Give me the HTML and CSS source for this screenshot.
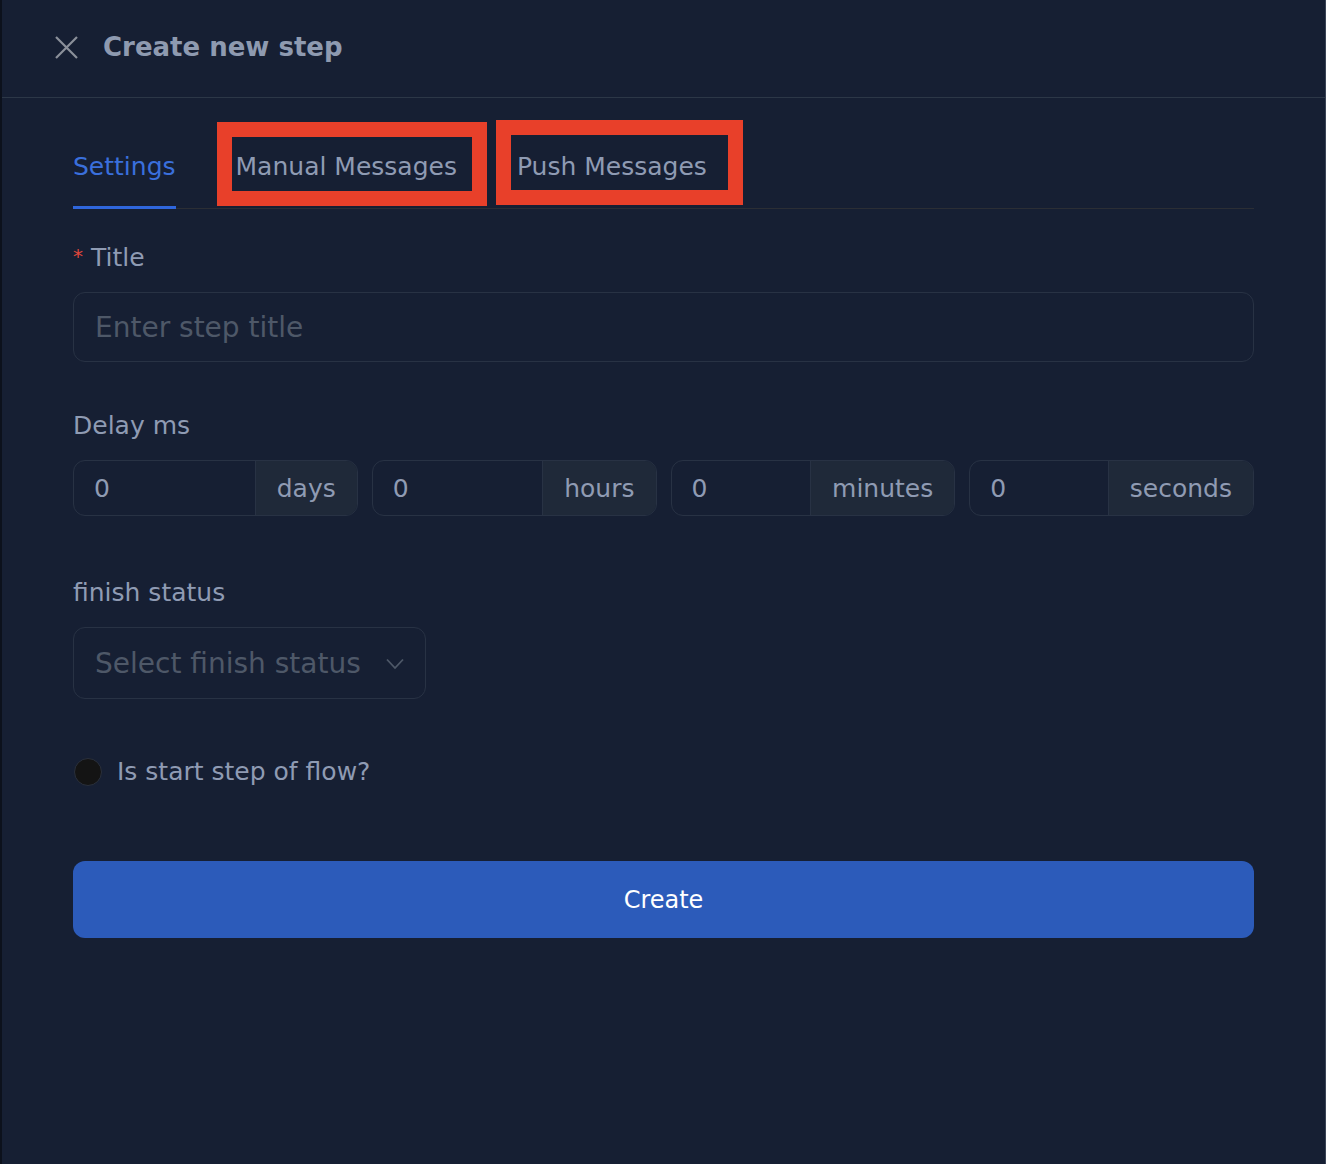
FILE: index.html
```html
<!DOCTYPE html>
<html lang="en">
<head>
<meta charset="utf-8">
<title>Create new step</title>
<link rel="stylesheet" href="styles.css">
</head>
<body>
<div class="drawer">
  <header class="drawer-header">
    <svg class="close-icon" width="23" height="23" viewBox="0 0 23 23" aria-hidden="true">
      <path d="M1 1 L22 22 M22 1 L1 22" stroke="#8b909a" stroke-width="2.2" fill="none"/>
    </svg>
    <h1 class="drawer-title">Create new step</h1>
  </header>
  <main class="drawer-body">
    <nav class="tabs">
      <div class="tab tab-active">Settings</div>
      <div class="tab">Manual Messages</div>
      <div class="tab">Push Messages</div>
      <span class="mark mark-1"></span>
      <span class="mark mark-2"></span>
    </nav>

    <div class="form-item form-first">
      <label class="label"><span class="req">*</span>Title</label>
      <div class="input input-lg"><span class="placeholder">Enter step title</span></div>
    </div>

    <div class="form-item form-delay">
      <label class="label">Delay ms</label>
      <div class="delay-row">
        <div class="group"><span class="g-input">0</span><span class="addon">days</span></div>
        <div class="group"><span class="g-input">0</span><span class="addon">hours</span></div>
        <div class="group"><span class="g-input">0</span><span class="addon">minutes</span></div>
        <div class="group"><span class="g-input">0</span><span class="addon">seconds</span></div>
      </div>
    </div>

    <div class="form-item form-finish">
      <label class="label">finish status</label>
      <div class="select">
        <span class="placeholder">Select finish status</span>
        <svg class="chevron" width="18" height="12" viewBox="0 0 18 12" aria-hidden="true">
          <path d="M1 1.5 L9 10 L17 1.5" stroke="#4e5868" stroke-width="1.8" fill="none"/>
        </svg>
      </div>
    </div>

    <div class="radio-row">
      <span class="radio"></span>
      <span class="radio-text">Is start step of flow?</span>
    </div>

    <button class="create-btn">Create</button>
  </main>
</div>
</body>
</html>
```
FILE: styles.css
```css
* { box-sizing: border-box; }
html, body { margin: 0; padding: 0; }
body {
  background: #161f33;
  font-family: "DejaVu Sans", "Liberation Sans", sans-serif;
  color: #8f9bb3;
}
.drawer {
  width: 1326px;
  height: 1164px;
  background: #161f33;
  border-left: 2px solid #0c111c;
  border-right: 1px solid #3a4456;
}
.drawer-header {
  height: 98px;
  border-bottom: 1px solid #2c3747;
  display: flex;
  align-items: center;
  padding-left: 53px;
  padding-bottom: 3px;
}
.close-icon { display: block; margin-right: 25px; }
.drawer-title {
  margin: 0;
  font-size: 26px;
  font-weight: bold;
  color: #8e9ab0;
  line-height: 34px;
}
.drawer-body {
  padding: 32px 71px 0 71px;
}
.tabs {
  position: relative;
  display: flex;
  gap: 60px;
  border-bottom: 1px solid #2b2e35;
}
.tab {
  position: relative;
  font-size: 25px;
  line-height: 30px;
  padding: 22px 0 26px;
  color: #8f9bb3;
}
.tab-active { color: #3a6fdc; }
.tab-active::after {
  content: "";
  position: absolute;
  left: 0; right: 0; bottom: -1px;
  height: 3px;
  background: #2f66dc;
}
.mark {
  position: absolute;
  border: 15px solid #e8402a;
}
.mark-1 { left: 144px; top: -8px; width: 270px; height: 84px; }
.mark-2 { left: 423px; top: -10px; width: 247px; height: 85px; }

.form-item { display: flex; flex-direction: column; }
.label {
  font-size: 25px;
  line-height: 34px;
  margin-bottom: 17px;
  color: #8f9bb3;
}
.req { color: #e0473c; font-size: 20px; margin-right: 8px; vertical-align: 3px; }
.form-first { margin-top: 30px; }
.form-delay { margin-top: 47px; }
.form-finish { margin-top: 60px; }

.input {
  height: 70px;
  border: 1px solid #283244;
  border-radius: 12px;
  display: flex;
  align-items: center;
  padding: 0 21px;
}
.placeholder { font-size: 28px; color: #4e5868; }

.delay-row { display: flex; gap: 14px; }
.group {
  flex: 1;
  height: 56px;
  display: flex;
  border: 1px solid #283244;
  border-radius: 12px;
  overflow: hidden;
}
.g-input {
  flex: 1;
  display: flex;
  align-items: center;
  padding-left: 20px;
  font-size: 25px;
  color: #8f9bb3;
}
.addon {
  display: flex;
  align-items: center;
  padding: 0 21px;
  background: #1f2939;
  border-left: 1px solid #283244;
  font-size: 25px;
  color: #8f9bb3;
}

.select {
  width: 353px;
  height: 72px;
  border: 1px solid #283244;
  border-radius: 12px;
  display: flex;
  align-items: center;
  justify-content: space-between;
  padding: 0 21px;
}
.chevron { display: block; margin-top: 2px; }

.radio-row {
  margin-top: 59px;
  display: flex;
  align-items: center;
  gap: 15px;
  padding-left: 1px;
}
.radio {
  width: 28px;
  height: 28px;
  border-radius: 50%;
  background: #141414;
  border: 1px solid #2a303c;
}
.radio-text { font-size: 25px; color: #8f9bb3; line-height: 28px; }

.create-btn {
  display: block;
  width: 100%;
  margin-top: 75px;
  height: 77px;
  border: none;
  border-radius: 12px;
  background: #2c5bba;
  color: #ffffff;
  font-family: "DejaVu Sans", sans-serif;
  font-size: 24px;
}
```
